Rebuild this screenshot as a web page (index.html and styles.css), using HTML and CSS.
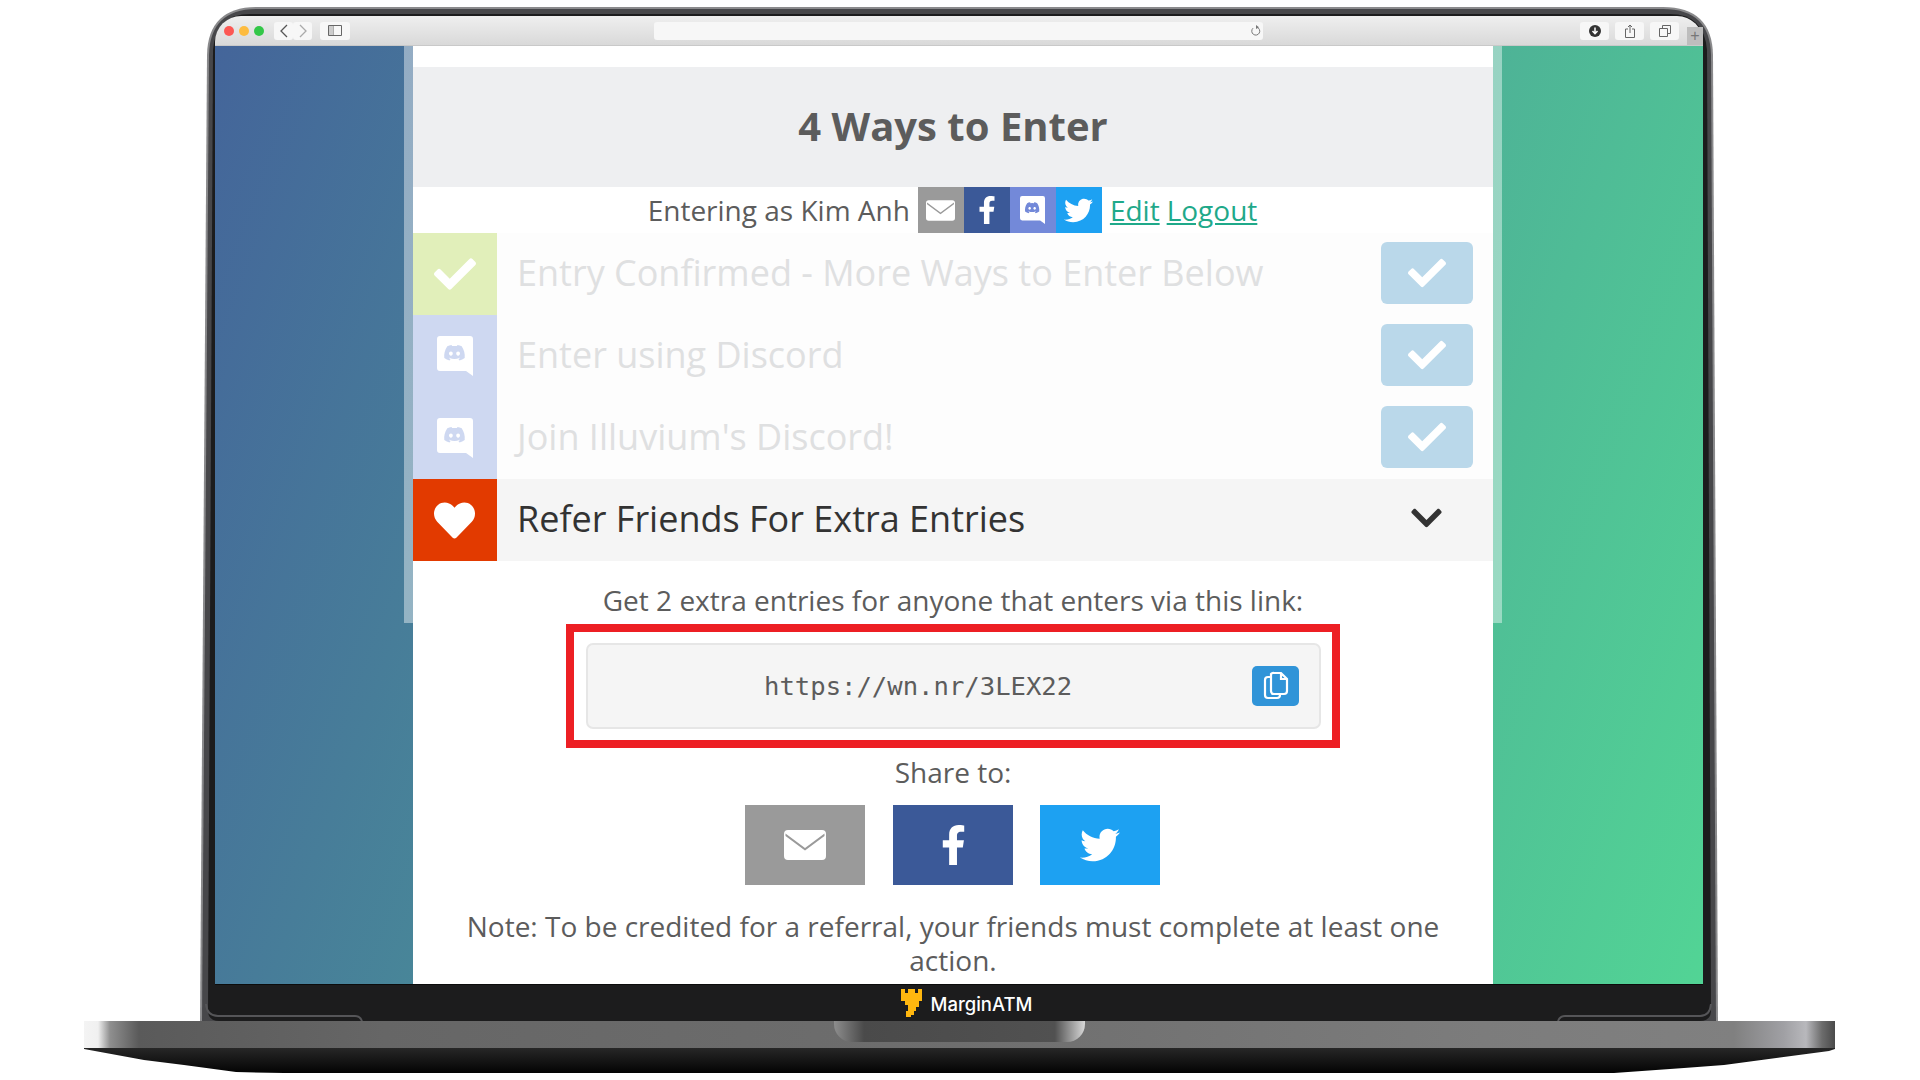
FILE: index.html
```html
<!DOCTYPE html>
<html lang="en">

<head>
    <meta charset="UTF-8">
    <title>4 Ways to Enter</title>
    <link rel="stylesheet" href="styles.css">
</head>

<body>
    <!-- icon set, used through <use> below -->
    <svg class="icon-defs" xmlns="http://www.w3.org/2000/svg">
        <symbol id="i-check" viewBox="0 0 512 512"><path d="M173.898 439.404l-166.4-166.4c-9.997-9.997-9.997-26.206 0-36.204l36.203-36.204c9.997-9.998 26.207-9.998 36.204 0L192 312.69 432.095 72.596c9.997-9.997 26.207-9.997 36.204 0l36.203 36.204c9.997 9.997 9.997 26.206 0 36.204l-294.4 294.401c-9.998 9.997-26.207 9.997-36.204-.001z"/></symbol>
        <symbol id="i-heart" viewBox="0 0 512 512"><path d="M462.3 62.6C407.5 15.9 326 24.3 275.7 76.2L256 96.5l-19.7-20.3C186.1 24.3 104.5 15.9 49.7 62.6c-62.8 53.6-66.1 149.8-9.9 207.9l193.5 199.8c12.5 12.9 32.8 12.9 45.3 0l193.5-199.8c56.3-58.1 53-154.3-9.8-207.9z"/></symbol>
        <symbol id="i-chevron" viewBox="0 0 448 512"><path d="M207.029 381.476L12.686 187.132c-9.373-9.373-9.373-24.569 0-33.941l22.667-22.667c9.357-9.357 24.522-9.375 33.901-.04L224 284.505l154.745-154.021c9.379-9.335 24.544-9.317 33.901.04l22.667 22.667c9.373 9.373 9.373 24.569 0 33.941L240.971 381.476c-9.373 9.372-24.569 9.372-33.942 0z"/></symbol>
        <symbol id="i-fb" viewBox="0 0 320 512"><path d="M279.14 288l14.22-92.66h-88.91v-60.13c0-25.35 12.42-50.06 52.24-50.06h40.42V6.26S260.43 0 225.36 0c-73.22 0-121.08 44.38-121.08 124.72v70.62H22.89V288h81.39v224h100.17V288z"/></symbol>
        <symbol id="i-tw" viewBox="0 0 512 512"><path d="M459.37 151.716c.325 4.548.325 9.097.325 13.645 0 138.72-105.583 298.558-298.558 298.558-59.452 0-114.68-17.219-161.137-47.106 8.447.974 16.568 1.299 25.34 1.299 49.055 0 94.213-16.568 130.274-44.832-46.132-.975-84.792-31.188-98.112-72.772 6.498.974 12.995 1.624 19.818 1.624 9.421 0 18.843-1.3 27.614-3.573-48.081-9.747-84.143-51.98-84.143-102.985v-1.299c13.969 7.797 30.214 12.67 47.431 13.319-28.264-18.843-46.781-51.005-46.781-87.391 0-19.492 5.197-37.36 14.294-52.954 51.655 63.675 129.3 105.258 216.365 109.807-1.624-7.797-2.599-15.918-2.599-24.04 0-57.828 46.782-104.934 104.934-104.934 30.213 0 57.502 12.67 76.67 33.137 23.715-4.548 46.456-13.32 66.599-25.34-7.798 24.366-24.366 44.833-46.132 57.827 21.117-2.273 41.584-8.122 60.426-16.243-14.292 20.791-32.161 39.308-52.628 54.253z"/></symbol>
        <symbol id="i-mail" viewBox="0 0 42 30"><path fill-rule="evenodd" d="M4 0h34a4 4 0 0 1 4 4v22a4 4 0 0 1-4 4H4a4 4 0 0 1-4-4V4a4 4 0 0 1 4-4zM1.500 6L21 20.500 40.500 6V3.500L21 18 1.500 3.500z"/></symbol>
        <symbol id="i-discord" viewBox="0 0 36 40"><path fill-rule="evenodd" d="M3 0h30a3 3 0 0 1 3 3v37l-7-5H3a3 3 0 0 1-3-3V3a3 3 0 0 1 3-3zM24.700 10.300a17 17 0 0 0-4.200-1.300l-.6 1.100a15 15 0 0 0-4.800 0L14.500 9a17 17 0 0 0-4.200 1.300C7.600 14.300 6.900 18.200 7.300 22a17 17 0 0 0 5.200 2.600l1.100-1.700a11 11 0 0 1-1.700-.8l.4-.3a12 12 0 0 0 10.400 0l.4.300a11 11 0 0 1-1.700.8l1.100 1.700a17 17 0 0 0 5.200-2.600c.4-4.400-.7-8.300-3-11.700zM13.900 19.700c-1 0-1.900-.9-1.900-2.100s.8-2.100 1.900-2.100 1.900.9 1.900 2.100-.9 2.100-1.900 2.100zm7.200 0c-1 0-1.900-.9-1.900-2.100s.8-2.100 1.900-2.100 1.900.9 1.900 2.100-.8 2.100-1.900 2.100z"/></symbol>
    </svg>

    <div class="stage">
        <!-- lid of the laptop, sits behind the screen -->
        <svg class="lid" viewBox="0 0 1920 1022" xmlns="http://www.w3.org/2000/svg">
            <path d="M257 7H1663Q1712 7 1713 55L1718 1022H200L207 55Q208 7 257 7Z" fill="#8a8a8c"/>
            <path d="M257 9H1663Q1710 9 1711 55L1716 1022H202L209 55Q210 9 257 9Z" fill="#47474a"/>
            <path d="M250 14H1670Q1704 14 1707 50L1711 1010Q1711 1021 1700 1021H219Q208 1021 208 1010L213 50Q216 14 250 14Z" fill="#1c1c1d"/>
            <path d="M206 1004Q207 1016 218 1016H355Q360 1016 362 1021" fill="none" stroke="#555558" stroke-width="2"/>
            <path d="M1711 1004Q1710 1016 1700 1016H1565Q1560 1016 1558 1021" fill="none" stroke="#555558" stroke-width="2"/>
        </svg>

        <div class="display">
            <header class="toolbar">
                <div class="lights">
                    <span class="light light-red"></span>
                    <span class="light light-yellow"></span>
                    <span class="light light-green"></span>
                </div>
                <div class="tool-group">
                    <span class="tool tool-nav">
                        <svg width="10" height="14" viewBox="0 0 10 14"><path d="M8 1L2 7l6 6" fill="none" stroke="#555" stroke-width="1.3"/></svg>
                    </span>
                    <span class="tool tool-nav">
                        <svg width="10" height="14" viewBox="0 0 10 14"><path d="M2 1l6 6-6 6" fill="none" stroke="#aaa" stroke-width="1.3"/></svg>
                    </span>
                </div>
                <span class="tool tool-side">
                    <svg width="14" height="11" viewBox="0 0 14 11"><path d="M.5.5h13v10H.5zM5 .5v10" fill="none" stroke="#666"/><path d="M1 1h4v9H1z" fill="#ccc"/></svg>
                </span>
                <div class="url-bar">
                    <svg width="12" height="12" viewBox="0 0 12 12"><path d="M7 2.300A4 4 0 1 1 3 3.200" fill="none" stroke="#777"/><path d="M6 0l3 2.300L6 4z" fill="#777"/></svg>
                </div>
                <div class="tool-right">
                    <span class="tool">
                        <svg width="12" height="12" viewBox="0 0 12 12"><circle cx="6" cy="6" r="6" fill="#333"/><path d="M6 2.500v6M3.500 6L6 8.700 8.500 6" fill="none" stroke="#fff" stroke-width="1.500"/></svg>
                    </span>
                    <span class="tool">
                        <svg width="10" height="14" viewBox="0 0 10 14"><path d="M3 5H.5v8.500h9V5H7M5 9V1M3 3l2-2 2 2" fill="none" stroke="#666"/></svg>
                    </span>
                    <span class="tool">
                        <svg width="12" height="12" viewBox="0 0 12 12"><path d="M3.500 3V.5h8v8H9M.5 3.500h8v8h-8z" fill="none" stroke="#666"/></svg>
                    </span>
                    <span class="tool-plus">+</span>
                </div>
            </header>

            <div class="screen">
                <div class="column">
                    <main class="page">
                        <h1 class="title">4 Ways to Enter</h1>

                        <div class="entering">
                            <span>Entering as Kim Anh</span>
                            <div class="socials">
                                <span class="social bg-mail"><svg class="ic-mail"><use href="#i-mail"/></svg></span>
                                <span class="social bg-fb"><svg class="ic-fb"><use href="#i-fb"/></svg></span>
                                <span class="social bg-discord"><svg class="ic-discord"><use href="#i-discord"/></svg></span>
                                <span class="social bg-tw"><svg class="ic-tw"><use href="#i-tw"/></svg></span>
                            </div>
                            <div class="entering-links">
                                <a href="#">Edit</a>
                                <a href="#">Logout</a>
                            </div>
                        </div>

                        <div class="entry entry-done">
                            <div class="entry-icon bg-green"><svg class="ic-check"><use href="#i-check"/></svg></div>
                            <div class="entry-title">Entry Confirmed - More Ways to Enter Below</div>
                            <div class="entry-btn"><svg class="ic-btn"><use href="#i-check"/></svg></div>
                        </div>
                        <div class="entry entry-done">
                            <div class="entry-icon bg-periwinkle"><svg class="ic-bubble"><use href="#i-discord"/></svg></div>
                            <div class="entry-title">Enter using Discord</div>
                            <div class="entry-btn"><svg class="ic-btn"><use href="#i-check"/></svg></div>
                        </div>
                        <div class="entry entry-done">
                            <div class="entry-icon bg-periwinkle"><svg class="ic-bubble"><use href="#i-discord"/></svg></div>
                            <div class="entry-title">Join Illuvium's Discord!</div>
                            <div class="entry-btn"><svg class="ic-btn"><use href="#i-check"/></svg></div>
                        </div>
                        <div class="entry entry-open">
                            <div class="entry-icon bg-red"><svg class="ic-heart"><use href="#i-heart"/></svg></div>
                            <div class="entry-title">Refer Friends For Extra Entries</div>
                            <div class="entry-arrow"><svg class="ic-chevron"><use href="#i-chevron"/></svg></div>
                        </div>

                        <section class="refer">
                            <p class="refer-lead">Get 2 extra entries for anyone that enters via this link:</p>
                            <div class="highlight">
                                <div class="link-box">
                                    <span class="link-text">https://wn.nr/3LEX22</span>
                                    <span class="copy-btn">
                                        <svg width="26" height="30" viewBox="0 0 26 30"><path d="M8 6H5a3 3 0 0 0-3 3v15a3 3 0 0 0 3 3h9a3 3 0 0 0 3-3v-1M8 3v17a3 3 0 0 0 3 3h10a3 3 0 0 0 3-3V8l-6-6h-7a3 3 0 0 0-3 1zM18 2v6h6" fill="none" stroke="#fff" stroke-width="2.200"/></svg>
                                    </span>
                                </div>
                            </div>
                            <p class="share-label">Share to:</p>
                            <div class="share-row">
                                <span class="share bg-mail"><svg class="ic-share-mail"><use href="#i-mail"/></svg></span>
                                <span class="share bg-fb"><svg class="ic-share-fb"><use href="#i-fb"/></svg></span>
                                <span class="share bg-tw"><svg class="ic-share-tw"><use href="#i-tw"/></svg></span>
                            </div>
                            <p class="note">Note: To be credited for a referral, your friends must complete at least one action.</p>
                        </section>
                    </main>
                </div>
            </div>

            <footer class="bezel">
                <svg class="castle" viewBox="0 0 21 28"><path d="M0 0h4v4h3V0h7v4h3V0h4v12h-3v6h-3v4h-2v4h-3v2H5v-6h2v-6H4V12H0z" fill="#ffb70f"/></svg>
                <span class="brand">MarginATM</span>
            </footer>
        </div>

        <div class="base">
            <div class="notch"></div>
        </div>
        <div class="base-under"></div>
    </div>
</body>

</html>
```

FILE: styles.css
```css
* {
    margin: 0;
    padding: 0;
    box-sizing: border-box;
}

body {
    width: 1920px;
    height: 1080px;
    overflow: hidden;
    background: #fff;
    font-family: 'Open Sans', sans-serif;
    color: #5c5c5c;
}

svg {
    display: block;
    fill: currentColor;
}

.icon-defs {
    width: 0;
    height: 0;
    overflow: hidden;
}

.stage {
    position: relative;
    height: 1080px;
    padding-top: 16px;
}

.lid {
    position: absolute;
    top: 0;
    left: 0;
    width: 1920px;
    height: 1022px;
}

.display {
    position: relative;
    width: 1488px;
    margin-left: 215px;
}

/* browser chrome */
.toolbar {
    display: flex;
    align-items: center;
    height: 30px;
    padding-left: 9px;
    background: linear-gradient(#efefef, #d9d9d9);
    border-radius: 26px 26px 0 0;
    border-bottom: 1px solid #c9c9c9;
}

.lights {
    display: flex;
    gap: 5px;
    margin-right: 10px;
}

.light {
    width: 10px;
    height: 10px;
    border-radius: 50%;
}

.light-red {
    background: #fc5753;
}

.light-yellow {
    background: #fdbc40;
}

.light-green {
    background: #33c748;
}

.tool-group {
    display: flex;
    margin-right: 8px;
}

.tool {
    display: flex;
    align-items: center;
    justify-content: center;
    width: 29px;
    height: 18px;
    background: #f7f7f7;
    border-radius: 3px;
}

.tool-nav {
    width: 19px;
}

.tool-side {
    width: 30px;
}

.url-bar {
    display: flex;
    align-items: center;
    justify-content: flex-end;
    width: 609px;
    height: 18px;
    margin-left: 304px;
    padding-right: 1px;
    background: #f7f7f7;
    border-radius: 3px;
}

.tool-right {
    display: flex;
    align-items: center;
    gap: 6px;
    margin-left: 317px;
}

.tool-plus {
    width: 16px;
    height: 18px;
    margin: 10px 0 0 2px;
    background: #bdbdbd;
    font: 16px/18px 'Liberation Sans', sans-serif;
    color: #777;
    text-align: center;
}

.screen {
    height: 939px;
    padding-left: 189px;
    background: linear-gradient(110deg, #44659a, #52d495);
    overflow: hidden;
    border-bottom: 1px solid #0c0c0c;
}

/* pale strip each side of the page, stops part way down */
.column {
    width: 1098px;
    height: 100%;
    padding: 0 9px;
    background: linear-gradient(rgba(255, 255, 255, .42), rgba(255, 255, 255, .42)) no-repeat top / 100% 577px;
}

.page {
    height: 100%;
    padding-top: 21px;
    background: #fff;
    text-align: center;
}

.title {
    height: 120px;
    background: #eeeff1;
    font-size: 40px;
    font-weight: 700;
    line-height: 118px;
    color: #5c5c5c;
}

.entering {
    display: flex;
    align-items: center;
    justify-content: center;
    gap: 8px;
    height: 46px;
    padding-right: 1px;
    font-size: 28px;
}

.socials {
    display: flex;
}

.social {
    display: flex;
    align-items: center;
    justify-content: center;
    width: 46px;
    height: 46px;
    color: #fff;
}

.entering-links {
    display: flex;
    gap: 7px;
}

.entering-links a {
    color: #1fa98a;
}

.bg-mail {
    background: #9a9a9a;
}

.bg-fb {
    background: #3b5998;
}

.bg-discord {
    background: #7389d9;
}

.bg-tw {
    background: #1da1f2;
}

.bg-green {
    background: #e1efba;
}

.bg-periwinkle {
    background: #ced8f1;
}

.bg-red {
    background: #e23a00;
}

.ic-mail {
    width: 29px;
    height: 21px;
}

.ic-fb {
    width: 18px;
    height: 28px;
}

.ic-discord {
    width: 25px;
    height: 28px;
}

.ic-tw {
    width: 29px;
    height: 29px;
}

/* entry rows */
.entry {
    display: flex;
    align-items: center;
    height: 82px;
    text-align: left;
    font-size: 36px;
}

.entry-done {
    background: #fdfdfd;
    color: #dfe0e1;
}

.entry-open {
    background: #f5f5f5;
    color: #333;
}

.entry-icon {
    display: flex;
    align-items: center;
    justify-content: center;
    flex: none;
    width: 84px;
    height: 100%;
    color: #fff;
}

.entry-title {
    flex: 1;
    padding: 0 0 4px 20px;
}

.entry-btn {
    display: flex;
    align-items: center;
    justify-content: center;
    width: 92px;
    height: 62px;
    margin: 0 20px 2px 0;
    background: #bad8ea;
    border-radius: 6px;
    color: #fff;
}

.entry-arrow {
    display: flex;
    justify-content: center;
    width: 92px;
    margin: -4px 21px 0 -1px;
}

.ic-check {
    width: 42px;
    height: 42px;
}

.ic-bubble {
    width: 36px;
    height: 40px;
}

.ic-btn {
    width: 38px;
    height: 38px;
    margin-right: 1px;
}

.ic-heart {
    width: 41px;
    height: 41px;
    margin-right: 1px;
}

.ic-chevron {
    width: 31px;
    height: 36px;
}

/* referral panel */
.refer {
    font-size: 28px;
    line-height: 34px;
}

.refer-lead {
    margin-top: 22px;
}

.highlight {
    width: 774px;
    height: 124px;
    margin: 7px auto 0 153px;
    padding: 11px 11px 11px 12px;
    border: 8px solid #ed1f24;
}

.link-box {
    display: flex;
    align-items: center;
    justify-content: space-between;
    height: 86px;
    padding: 0 20px 0 176px;
    background: #f5f5f5;
    border: 2px solid #e6e6e6;
    border-radius: 7px;
}

.link-text {
    font-family: 'DejaVu Sans Mono', monospace;
    font-size: 25.600px;
}

.copy-btn {
    display: flex;
    align-items: center;
    justify-content: center;
    width: 47px;
    height: 40px;
    background: #3094d8;
    border-radius: 5px;
}

.share-label {
    margin-top: 7px;
}

.share-row {
    display: flex;
    justify-content: center;
    gap: 28px;
    margin-top: 16px;
    padding-right: 1px;
}

.share {
    display: flex;
    align-items: center;
    justify-content: center;
    width: 120px;
    height: 80px;
    color: #fff;
}

.share:last-child {
    margin-left: -1px;
}

.ic-share-mail {
    width: 42px;
    height: 30px;
}

.ic-share-fb {
    width: 25px;
    height: 40px;
}

.ic-share-tw {
    width: 40px;
    height: 40px;
}

.note {
    width: 1000px;
    margin: 24px auto 0;
}

/* bottom of the lid and the base */
.bezel {
    display: flex;
    align-items: center;
    justify-content: center;
    gap: 9px;
    height: 36px;
    padding-left: 15px;
}

.castle {
    width: 21px;
    height: 28px;
}

.brand {
    margin-top: 2px;
    font-family: Inter, sans-serif;
    font-size: 18.500px;
    font-weight: 500;
    color: #fff;
}

.base {
    position: relative;
    display: flex;
    justify-content: center;
    width: 1751px;
    height: 27px;
    margin-left: 84px;
    background: linear-gradient(90deg, #f4f4f4 0, #f0f0f0 14px, #8f8f8f 26px, #5a5a5a 55px, #666 300px, #6e6e6e 875px, #7c7c7c 1400px, #808080 1650px, #a0a0a4 1700px, #b8b8bc 1722px, #6c6c6c 1738px, #4a4a4a 1751px);
}

.notch {
    width: 251px;
    height: 21px;
    background: linear-gradient(90deg, #8d8d8d, #4a4a4a 12%, #515151 88%, #d8d8d8);
    border-radius: 0 0 18px 18px;
}

.base-under {
    width: 1751px;
    height: 25px;
    margin-left: 84px;
    background: linear-gradient(#272727, #030303);
    clip-path: polygon(0 0, 100% 0, 100% 1px, 1745px 3px, 1640px 17px, 1600px 20px, 1530px 25px, 200px 25px, 152px 24px, 100px 17px, 60px 12px, 0 1px);
}
```
